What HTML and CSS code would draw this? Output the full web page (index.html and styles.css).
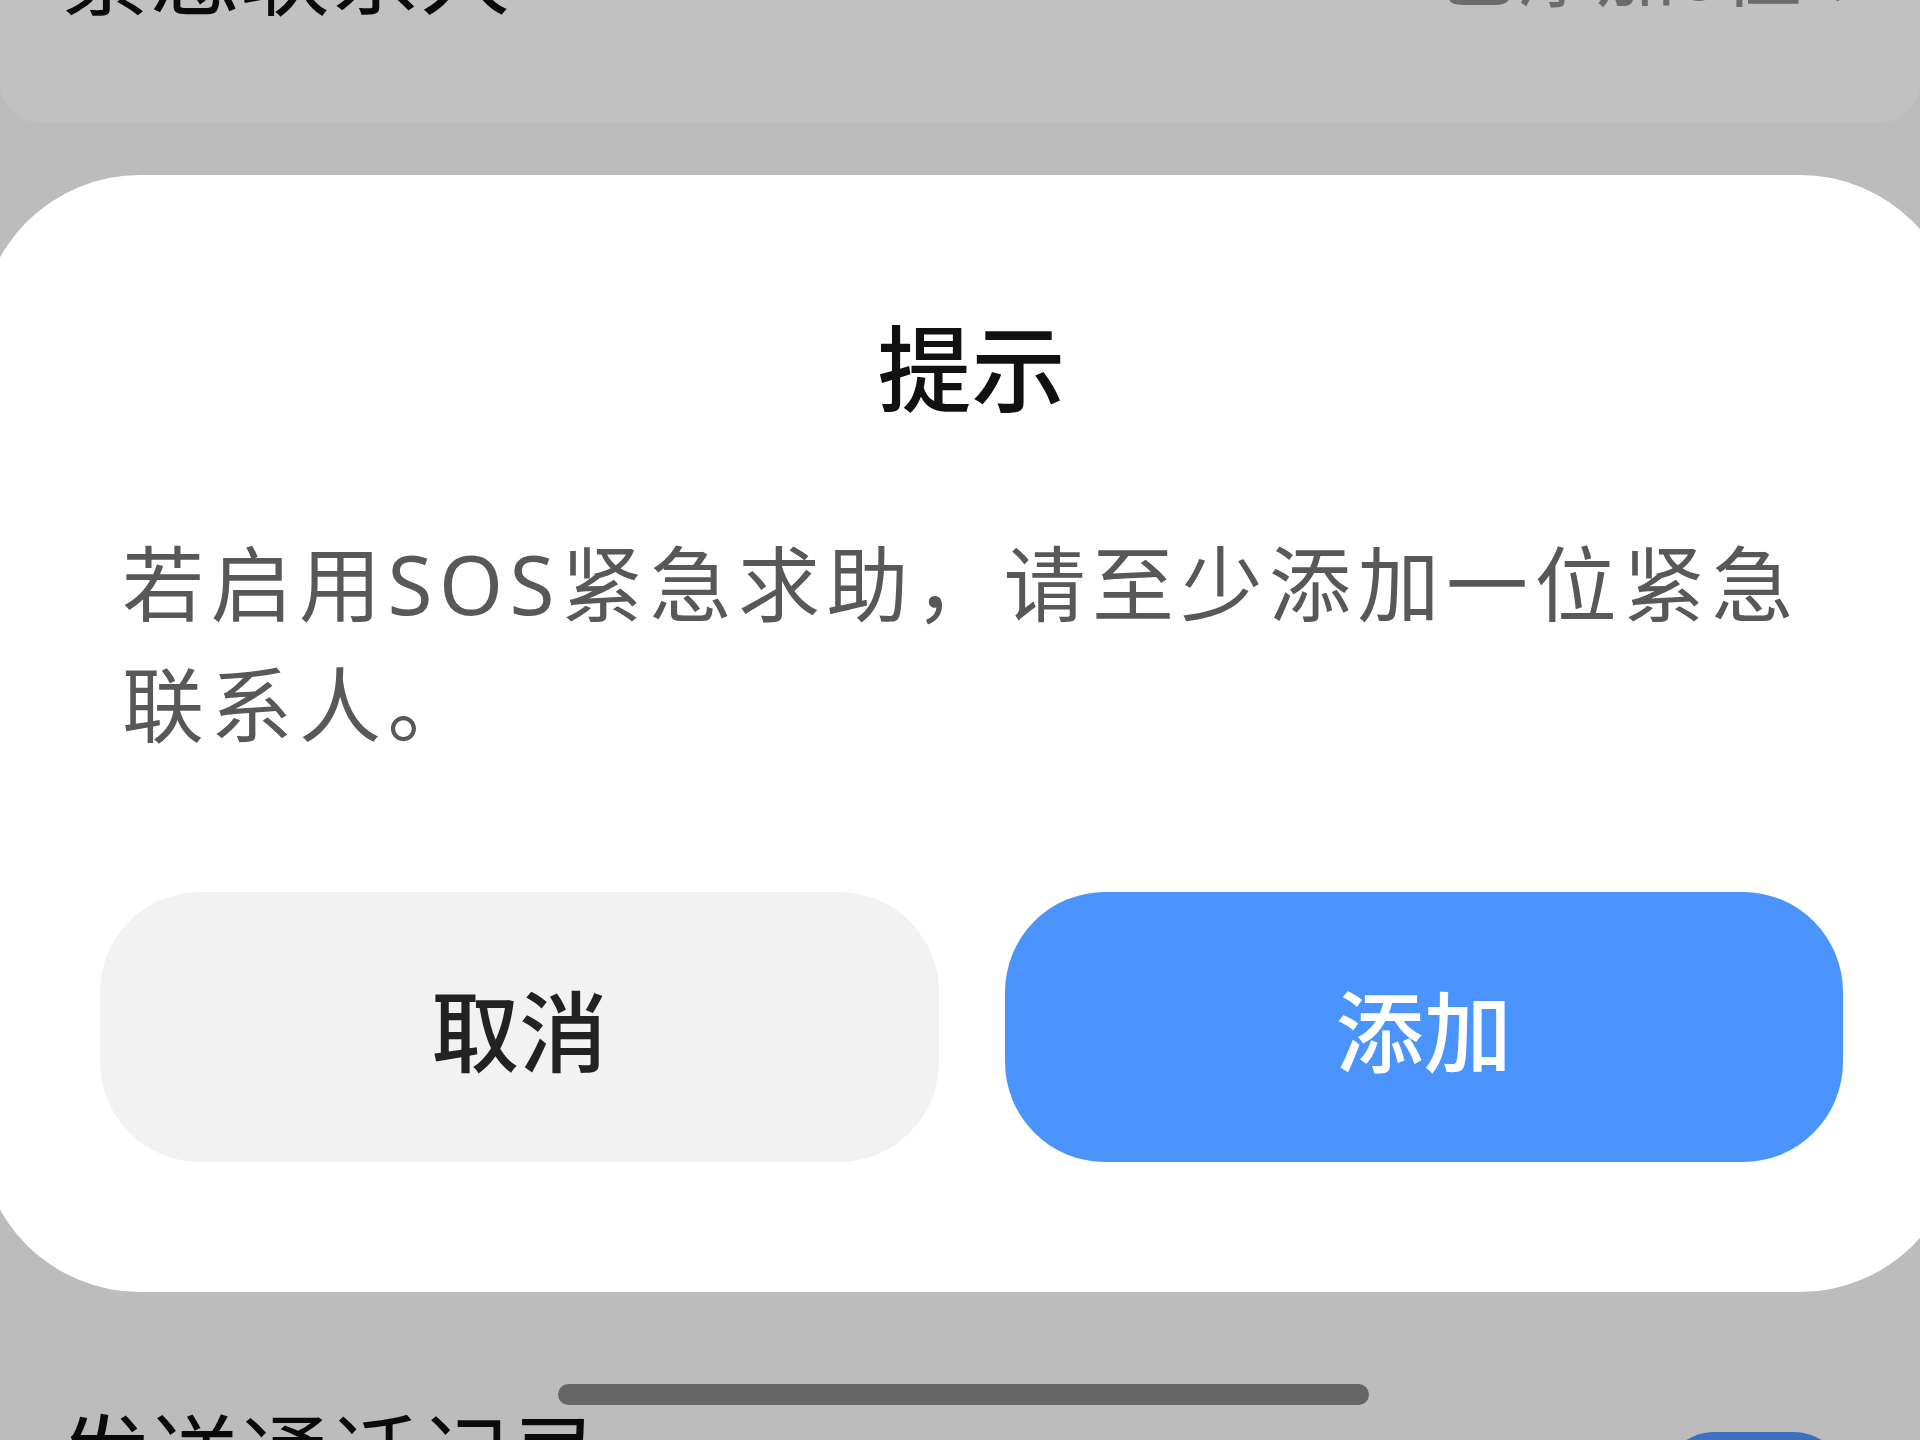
FILE: index.html
```html
<!DOCTYPE html>
<html lang="zh-CN">
<head>
  <meta charset="UTF-8">
  <title>提示</title>
  <link rel="stylesheet" href="styles.css">
</head>
<body>

<div class="bg-card">
  <div class="bg-row">
    <span class="bg-label">紧急联系人</span>
    <span class="bg-value">已添加0位
      <svg class="chevron" viewBox="0 0 40 80" width="40" height="80"><path d="M8 8 L32 40 L8 72" fill="none" stroke="#6b6b6b" stroke-width="7" stroke-linecap="round" stroke-linejoin="round"/></svg>
    </span>
  </div>
</div>

<div class="dialog">
  <h1 class="dialog-title">提示</h1>
  <p class="dialog-text">若启用SOS紧急求助，请至少添加一位紧急联系人。</p>
  <div class="dialog-actions">
    <button class="btn btn-cancel">取消</button>
    <button class="btn btn-add">添加</button>
  </div>
</div>

<div class="bg-row bg-row-bottom">
  <span class="bg-label">发送通话记录</span>
  <span class="toggle"></span>
</div>

<div class="home-bar"></div>

</body>
</html>
```

FILE: styles.css
```css
body {
  margin: 0;
  height: 1440px;
  overflow: hidden;
  position: relative;
  background-color: #bcbcbc;
  font-family: "Noto Sans", "Noto Sans CJK SC", sans-serif;
}
.bg-card {
  height: 123px;
  overflow: hidden;
  background-color: #c1c1c1;
  border-radius: 0 0 40px 40px;
}
.bg-row {
  display: flex;
  justify-content: space-between;
  align-items: flex-start;
  margin-top: -72px;
  padding: 0 60px;
  font-size: 90px;
  line-height: 90px;
}
.bg-label {
  color: #0a0a0a;
}
.bg-value {
  display: flex;
  align-items: flex-end;
  gap: 30px;
  margin-top: -4px;
  font-size: 80px;
  color: #6b6b6b;
}
.chevron {
  width: 28px;
  height: 60px;
  margin-bottom: 8px;
}
.dialog {
  margin: 52px -40px 0 -20px;
  height: 1117px;
  box-sizing: border-box;
  padding: 134px 117px 0 120px;
  background-color: #ffffff;
  border-radius: 160px;
}
.dialog-title {
  margin: 0;
  text-align: center;
  font-size: 94px;
  line-height: 120px;
  font-weight: 500;
  color: #111111;
}
.dialog-text {
  margin: 94px 0 0 0;
  padding: 0 30px 0 22px;
  font-size: 82px;
  line-height: 121px;
  letter-spacing: 6.5px;
  color: #585858;
}
.dialog-actions {
  display: flex;
  gap: 66px;
  margin-top: 127px;
}
.btn {
  flex: 1;
  height: 270px;
  border: none;
  border-radius: 100px;
  font-family: inherit;
  font-size: 88px;
  font-weight: 500;
  cursor: pointer;
}
.btn-cancel {
  background-color: #f2f2f2;
  color: #222222;
}
.btn-add {
  background-color: #4a94fc;
  color: #ffffff;
}
.bg-row-bottom {
  margin-top: 118px;
}
.toggle {
  width: 188px;
  height: 110px;
  margin-top: 22px;
  margin-right: 12px;
  border-radius: 55px;
  background-color: #3e70c0;
}
.home-bar {
  position: absolute;
  left: 558px;
  top: 1384px;
  width: 811px;
  height: 21px;
  border-radius: 11px;
  background-color: #666666;
}
```
